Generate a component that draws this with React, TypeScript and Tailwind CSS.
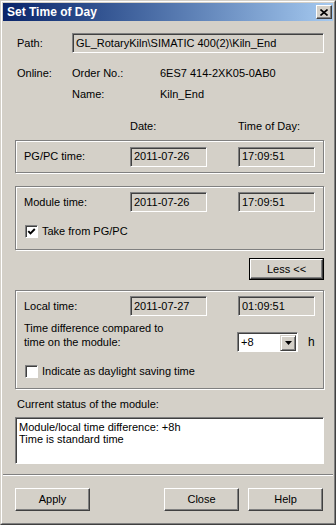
import React from "react";

const field =
  "h-[20px] flex items-center pl-[3px] bg-[#d4d0c8] border border-t-[#808080] border-l-[#808080] border-b-white border-r-white shadow-[inset_1px_1px_0_#404040] whitespace-nowrap overflow-hidden";
const group =
  "border border-[#808080] shadow-[1px_1px_0_#ffffff,inset_1px_1px_0_#ffffff]";
const btn =
  "h-[23px] w-[75px] flex items-center justify-center bg-[#d4d0c8] border border-t-white border-l-white border-r-[#404040] border-b-[#404040] shadow-[inset_-1px_-1px_0_#808080]";

function CheckBox({ checked }: { checked: boolean }) {
  return (
    <div className="w-[13px] h-[13px] bg-white border border-t-[#808080] border-l-[#808080] border-b-white border-r-white shadow-[inset_1px_1px_0_#404040] flex items-center justify-center">
      {checked && (
        <svg width="9" height="9" viewBox="0 0 9 9">
          <path d="M1.3 4.2 L3.5 6.5 L7.8 2" fill="none" stroke="#000" strokeWidth="1.9" />
        </svg>
      )}
    </div>
  );
}

export default function App() {
  return (
    <div className="w-[336px] h-[525px] bg-[#d4d0c8] font-['Liberation_Sans',Arial,sans-serif] text-[11px] text-black leading-none">
      <div className="w-full h-full border border-t-[#d4d0c8] border-l-[#d4d0c8] border-r-[#404040] border-b-[#404040]">
        <div className="w-full h-full border border-t-white border-l-white border-r-[#808080] border-b-[#808080] p-[1px] flex flex-col">
          {/* Title bar */}
          <div className="h-[18px] flex items-center justify-between pl-[4px] pr-[1px] bg-linear-to-r from-[#0a246a] to-[#a6caf0]">
            <span className="text-white font-bold text-[12px]">Set Time of Day</span>
            <div className="w-[16px] h-[14px] bg-[#d4d0c8] border border-t-white border-l-white border-r-[#404040] border-b-[#404040] shadow-[inset_-1px_-1px_0_#808080] flex items-center justify-center">
              <svg width="8" height="7" viewBox="0 0 8 7">
                <path d="M0.5 0.5 L7.5 6.5 M7.5 0.5 L0.5 6.5" stroke="#000" strokeWidth="1.6" />
              </svg>
            </div>
          </div>

          {/* Body */}
          <div className="pl-[12px] w-[321px] flex flex-col">
            <div className="w-[309px] flex flex-col">
              {/* Path */}
              <div className="mt-[12px] h-[20px] flex items-center">
                <div className="w-[57px] pl-[2px]">Path:</div>
                <div className={field + " w-[252px]"}>GL_RotaryKiln\SIMATIC 400(2)\Kiln_End</div>
              </div>
              {/* Online */}
              <div className="mt-[12px] h-[16px] flex items-center">
                <div className="w-[57px] pl-[2px]">Online:</div>
                <div className="w-[88px]">Order No.:</div>
                <div>6ES7 414-2XK05-0AB0</div>
              </div>
              <div className="mt-[5px] h-[16px] flex items-center">
                <div className="w-[57px]" />
                <div className="w-[88px]">Name:</div>
                <div>Kiln_End</div>
              </div>
              {/* Header */}
              <div className="mt-[16px] h-[16px] flex items-center">
                <div className="w-[115px]" />
                <div className="w-[108px]">Date:</div>
                <div>Time of Day:</div>
              </div>
              {/* Group 1 */}
              <div className={group + " mt-[6px] h-[33px] flex items-center pl-[8px]"}>
                <div className="w-[106px]">PG/PC time:</div>
                <div className={field + " w-[77px]"}>2011-07-26</div>
                <div className={field + " w-[77px] ml-[31px]"}>17:09:51</div>
              </div>
              {/* Group 2 */}
              <div className={group + " mt-[13px] h-[64px] flex flex-col pl-[8px] pt-[5px]"}>
                <div className="flex items-center h-[20px]">
                  <div className="w-[106px]">Module time:</div>
                  <div className={field + " w-[77px]"}>2011-07-26</div>
                  <div className={field + " w-[77px] ml-[31px]"}>17:09:51</div>
                </div>
                <div className="mt-[13px] flex items-center pl-[1px]">
                  <CheckBox checked />
                  <span className="ml-[4px]">Take from PG/PC</span>
                </div>
              </div>
              {/* Less */}
              <div className="mt-[8px] flex justify-end">
                <div className="w-[75px] h-[22px] border border-black">
                  <div className="w-full h-full flex items-center justify-center border border-t-white border-l-white border-r-[#404040] border-b-[#404040] shadow-[inset_-1px_-1px_0_#808080]">
                    Less &lt;&lt;
                  </div>
                </div>
              </div>
              {/* Group 3 */}
              <div className={group + " mt-[10px] h-[99px] flex flex-col pl-[8px] pt-[5px]"}>
                <div className="flex items-center h-[20px]">
                  <div className="w-[106px]">Local time:</div>
                  <div className={field + " w-[77px]"}>2011-07-27</div>
                  <div className={field + " w-[77px] ml-[31px]"}>01:09:51</div>
                </div>
                <div className="mt-[5px] flex items-start">
                  <div className="w-[213px] leading-[14px]">
                    Time difference compared to
                    <br />
                    time on the module:
                  </div>
                  <div className="mt-[11px] w-[61px] h-[20px] bg-white border border-t-[#808080] border-l-[#808080] border-b-white border-r-white shadow-[inset_1px_1px_0_#404040] flex items-center justify-between pl-[3px] pr-[1px] pt-[1px]">
                    <span>+8</span>
                    <div className="w-[16px] h-[16px] bg-[#d4d0c8] border border-t-[#d4d0c8] border-l-[#d4d0c8] border-r-[#404040] border-b-[#404040] shadow-[inset_1px_1px_0_#ffffff,inset_-1px_-1px_0_#808080] flex items-center justify-center">
                      <svg width="7" height="4" viewBox="0 0 7 4">
                        <path d="M0 0 H7 L3.5 4 Z" fill="#000" />
                      </svg>
                    </div>
                  </div>
                  <div className="mt-[11px] h-[20px] flex items-center ml-[10px] text-[12px]">h</div>
                </div>
                <div className="mt-[13px] flex items-center pl-[1px]">
                  <CheckBox checked={false} />
                  <span className="ml-[4px]">Indicate as daylight saving time</span>
                </div>
              </div>
              {/* Status */}
              <div className="mt-[7px] h-[16px] flex items-center pl-[2px]">Current status of the module:</div>
              <div className="mt-[5px] h-[47px] bg-white border border-t-[#808080] border-l-[#808080] border-b-white border-r-white shadow-[inset_1px_1px_0_#404040] pt-[3px] pl-[3px] leading-[12px]">
                Module/local time difference: +8h
                <br />
                Time is standard time
              </div>
            </div>
          </div>

          {/* Separator */}
          <div className="mt-[10px] h-[2px] border-t border-t-[#808080] border-b border-b-white" />

          {/* Buttons */}
          <div className="mt-[12px] pl-[12px] flex">
            <div className={btn}>Apply</div>
            <div className={btn + " ml-[74px]"}>Close</div>
            <div className={btn + " ml-[9px]"}>Help</div>
          </div>
        </div>
      </div>
    </div>
  );
}
